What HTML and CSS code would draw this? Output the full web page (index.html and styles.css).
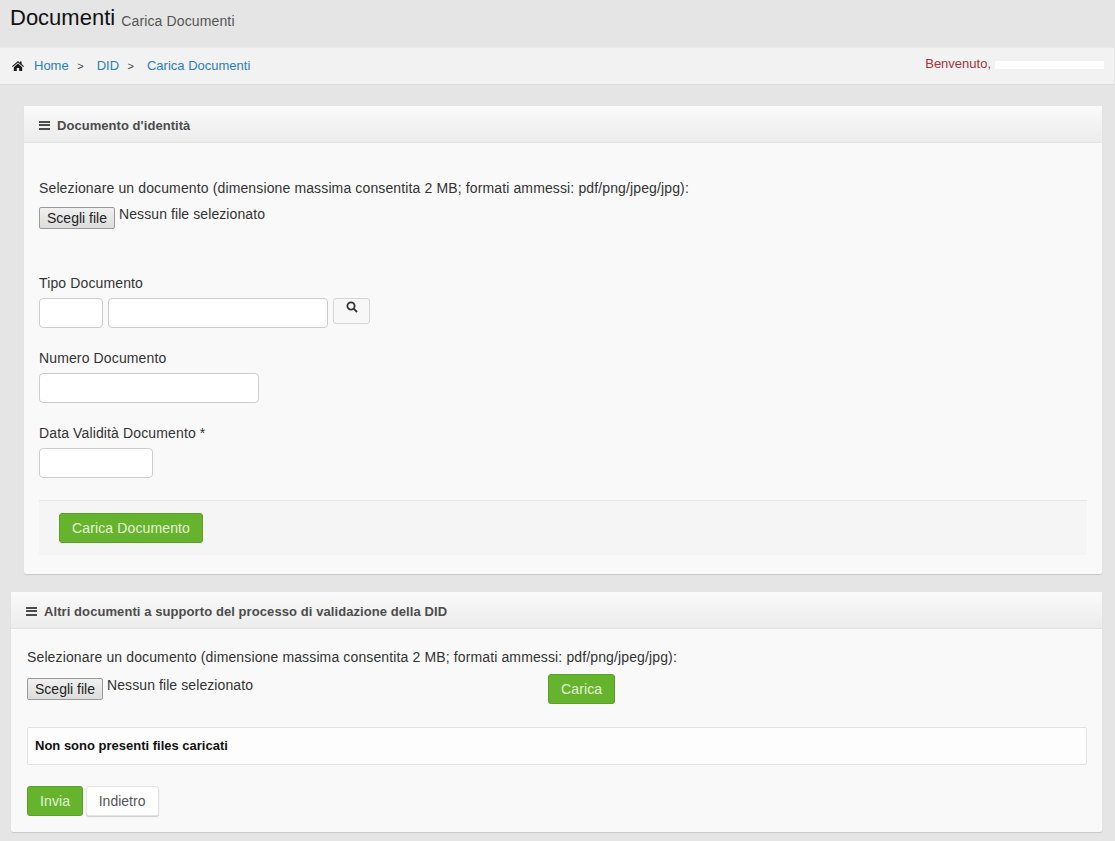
FILE: index.html
```html
<!DOCTYPE html>
<html lang="en">
<head>
    <meta charset="UTF-8">
    <meta name="viewport" content="width=device-width, initial-scale=1.0">
    <title>Documenti</title>
    <link rel="stylesheet" href="styles.css">
</head>
<body>

<div class="page-head">
    <h1>Documenti <small>Carica Documenti</small></h1>
</div>

<div class="page-bar">
    <ul class="breadcrumb">
        <li>
            <svg class="icon-home" viewBox="0 0 12 10" aria-hidden="true"><path d="M6 0 L8 1.7 V.6 H9.6 V3.1 L12 5.2 L11.3 6 L6 1.5 L.7 6 L0 5.2 Z M6 2.6 L10.2 6.2 V10 H7.2 V7 H4.8 V10 H1.8 V6.2 Z"/></svg>
            <a href="#">Home</a>
            <span class="sep">&gt;</span>
        </li>
        <li><a href="#">DID</a><span class="sep">&gt;</span></li>
        <li><a href="#">Carica Documenti</a></li>
    </ul>
    <div class="welcome">Benvenuto, <span class="redacted"></span></div>
</div>

<div class="content">
    <section class="panel panel-first">
        <div class="panel-title">
            <span class="icon-bars"></span>
            Documento d'identità
        </div>
        <div class="panel-body">
            <label class="file-label">Selezionare un documento (dimensione massima consentita 2 MB; formati ammessi: pdf/png/jpeg/jpg):</label>
            <div class="file-row">
                <button class="file-btn" type="button">Scegli file</button>
                <span class="file-name">Nessun file selezionato</span>
            </div>

            <div class="form-group group-tipo">
                <label>Tipo Documento</label>
                <div class="input-row">
                    <input class="input input-code" type="text">
                    <input class="input input-desc" type="text">
                    <button class="btn-search" type="button">
                        <svg viewBox="0 0 12 12" aria-hidden="true"><circle cx="5" cy="5" r="3.6"/><path d="M7.7 7.7 L11 11"/></svg>
                    </button>
                </div>
            </div>
            <div class="form-group">
                <label>Numero Documento</label>
                <input class="input input-num" type="text">
            </div>
            <div class="form-group">
                <label>Data Validità Documento *</label>
                <input class="input input-date" type="text">
            </div>

            <div class="form-actions">
                <button class="btn btn-green" type="button">Carica Documento</button>
            </div>
        </div>
    </section>

    <section class="panel panel-second">
        <div class="panel-title">
            <span class="icon-bars"></span>
            Altri documenti a supporto del processo di validazione della DID
        </div>
        <div class="panel-body">
            <label class="file-label">Selezionare un documento (dimensione massima consentita 2 MB; formati ammessi: pdf/png/jpeg/jpg):</label>
            <div class="upload-row">
                <div class="file-row">
                    <button class="file-btn" type="button">Scegli file</button>
                    <span class="file-name">Nessun file selezionato</span>
                </div>
                <button class="btn btn-green" type="button">Carica</button>
            </div>
            <div class="notice">Non sono presenti files caricati</div>
            <div class="bottom-actions">
                <button class="btn btn-green" type="button">Invia</button>
                <button class="btn btn-white" type="button">Indietro</button>
            </div>
        </div>
    </section>
</div>

</body>
</html>
```

FILE: styles.css
```css
* {
    margin: 0;
    padding: 0;
    box-sizing: border-box;
}

body {
    font-family: "Liberation Sans", Arial, sans-serif;
    font-size: 14px;
    line-height: 20px;
    letter-spacing: .13px;
    background-color: #e5e5e5;
    color: #333;
    height: 841px;
    overflow: hidden;
}

.page-head {
    height: 47px;
    padding: 4px 10px 0;
}

.page-head h1 {
    font-size: 22px;
    font-weight: 400;
    line-height: 28px;
    letter-spacing: 0;
    color: #111;
}

.page-head small {
    font-size: 14px;
    letter-spacing: .13px;
    color: #555;
    vertical-align: -1px;
}

.page-bar {
    height: 38px;
    margin-right: 1px;
    background-color: #f2f2f3;
    border-top: 1px solid #e9e9e9;
    border-bottom: 1px solid #d9d9d9;
    display: flex;
    justify-content: space-between;
    padding: 0 10px 0 12px;
}

.breadcrumb {
    list-style: none;
    display: flex;
    align-items: center;
    height: 35px;
    font-size: 13px;
    letter-spacing: 0;
}

.breadcrumb li {
    display: flex;
    align-items: center;
}

.breadcrumb a {
    color: #2a7fb8;
    text-decoration: none;
}

.breadcrumb .sep {
    color: #444;
    font-size: 11px;
    margin: 0 13px 0 8.5px;
}

.icon-home {
    width: 12px;
    height: 10px;
    fill: #1a1a1a;
    margin-right: 10px;
}

.welcome {
    color: #a5333c;
    font-size: 13px;
    letter-spacing: 0;
    line-height: 30px;
    display: flex;
    align-items: center;
    height: 32px;
    gap: 4px;
}

.redacted {
    display: block;
    width: 109px;
    height: 8px;
    margin-top: 1px;
    background-color: #fff;
}

.content {
    padding: 21px 13px 0 11px;
}

.panel {
    background-color: #f9f9f9;
    border-radius: 2px;
    box-shadow: 0 1px 1px #c8c8c8;
}

.panel-first {
    margin-left: 13px;
    height: 468px;
}

.panel-second {
    margin-top: 18px;
    height: 240px;
}

.panel-title {
    height: 37px;
    padding-top: 3px;
    font-size: 13px;
    font-weight: 700;
    letter-spacing: .05px;
    color: #4c4c4c;
    background: linear-gradient(to bottom, #fafafa, #ececec);
    border-bottom: 1px solid #e2e2e2;
    padding-left: 15px;
    display: flex;
    align-items: center;
    gap: 7px;
}

.panel-second .panel-title {
    letter-spacing: .08px;
}

.icon-bars {
    width: 11px;
    height: 9px;
    margin-top: -1px;
    border-top: 2px solid #4c4c4c;
    border-bottom: 2px solid #4c4c4c;
    position: relative;
}

.icon-bars::before {
    content: "";
    position: absolute;
    left: 0;
    right: 0;
    top: 1.5px;
    height: 2px;
    background-color: #4c4c4c;
}

.panel-first .panel-body {
    padding: 35px 15px 0;
}

.panel-second .panel-body {
    padding: 18px 15px 0 16px;
}

.file-label {
    display: block;
    color: #333;
}

.file-row {
    display: flex;
    align-items: flex-start;
    margin-top: 8px;
}

.file-btn {
    width: 76px;
    height: 22px;
    font-family: inherit;
    font-size: 14px;
    letter-spacing: 0;
    color: #222;
    background: linear-gradient(to bottom, #f0f0f0, #dcdcdc);
    border: 1px solid #9a9a9a;
    border-radius: 2px;
    margin-top: 1px;
}

.file-name {
    margin-left: 4px;
    line-height: 14px;
    margin-top: 1px;
    letter-spacing: .09px;
}

.form-group {
    margin-top: 20px;
}

.group-tipo {
    margin-top: 44px;
}

.form-group label {
    display: block;
    margin-bottom: 5px;
}

.input {
    display: block;
    height: 30px;
    background-color: #fff;
    border: 1px solid #ccc;
    border-radius: 4px;
}

.input-row {
    display: flex;
    align-items: flex-start;
    gap: 5px;
}

.input-code {
    width: 64px;
}

.input-desc {
    width: 220px;
}

.input-num {
    width: 220px;
}

.input-date {
    width: 114px;
}

.btn-search {
    width: 37px;
    height: 26px;
    background-color: #f7f7f7;
    border: 1px solid #d5d5d5;
    border-radius: 3px;
    display: flex;
    justify-content: center;
    padding-top: 2px;
}

.btn-search svg {
    width: 12px;
    height: 12px;
    fill: none;
    stroke: #333;
    stroke-width: 1.8;
}

.form-actions {
    margin-top: 22px;
    height: 55px;
    background-color: #f5f5f5;
    border-top: 1px solid #e5e5e5;
    padding: 12px 20px 0;
}

.btn {
    height: 30px;
    font-family: inherit;
    font-size: 14px;
    letter-spacing: .13px;
    border-radius: 3px;
}

.btn-green {
    color: #e4f5d6;
    background-color: #66b32e;
    border: 1px solid #5aa028;
    padding: 0 12px;
}

.btn-white {
    color: #555;
    background-color: #fff;
    border: 1px solid #e4e4e4;
    box-shadow: 0 1px 1px #ccc;
    padding: 0 12.5px 0 11.5px;
    letter-spacing: 0;
}

.upload-row {
    display: flex;
    align-items: flex-start;
    margin-top: 7px;
    gap: 295px;
}

.upload-row .file-row {
    margin-top: 0;
}

.upload-row .file-btn {
    margin-top: 4px;
}

.upload-row .file-name {
    margin-top: 4px;
    white-space: nowrap;
}

.notice {
    margin-top: 23px;
    height: 38px;
    line-height: 36px;
    background-color: #fdfdfd;
    border: 1px solid #e2e2e2;
    border-radius: 2px;
    padding-left: 7px;
    font-weight: 700;
    font-size: 13px;
    letter-spacing: 0;
    color: #111;
}

.bottom-actions {
    display: flex;
    gap: 3px;
    margin-top: 21px;
}
```
